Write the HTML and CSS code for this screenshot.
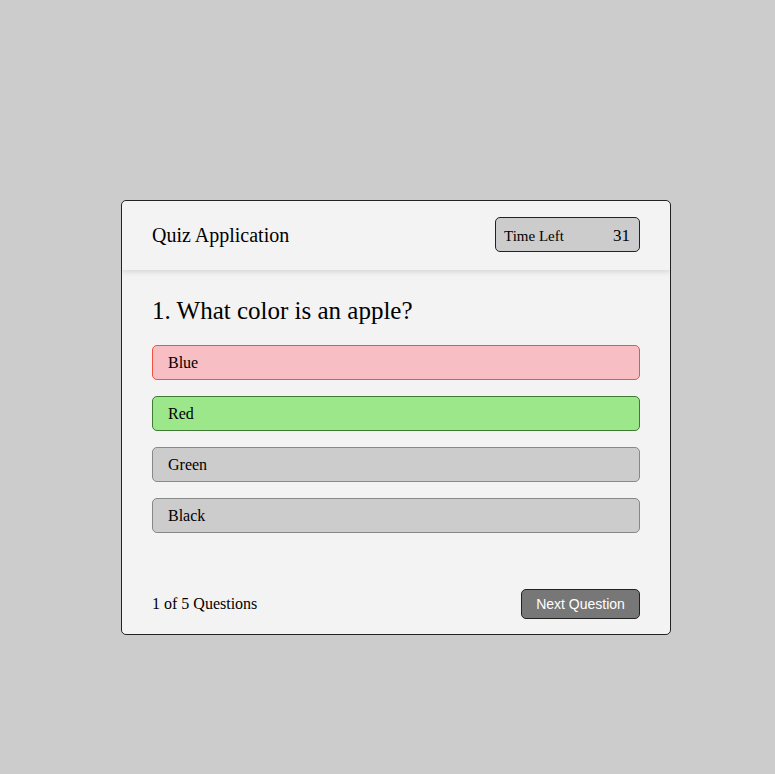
FILE: index.html
```html
<!DOCTYPE html>
<html>
<head>
<meta charset="utf-8">
<link rel="stylesheet" href="styles.css">
</head>
<body>
<div class="page">
  <div class="card">
    <div class="header">
      <div class="title">Quiz Application</div>
      <div class="timer">
        <span class="timer-label">Time Left</span>
        <span class="timer-value">31</span>
      </div>
    </div>
    <div class="body">
      <div class="question">1. What color is an apple?</div>
      <div class="options">
        <div class="option wrong">Blue</div>
        <div class="option right">Red</div>
        <div class="option">Green</div>
        <div class="option">Black</div>
      </div>
    </div>
    <div class="footer">
      <div class="count">1 of 5 Questions</div>
      <button class="next">Next Question</button>
    </div>
  </div>
</div>
</body>
</html>
```
FILE: styles.css
```css
html, body {
  margin: 0;
  padding: 0;
  background: #cccccc;
  font-family: "Liberation Serif", "Times New Roman", serif;
  color: #000;
}
.page {
  height: 774px;
  padding: 200px 0 0 121px;
  box-sizing: border-box;
}
.card {
  width: 550px;
  height: 435px;
  box-sizing: border-box;
  border: 1px solid #222;
  border-radius: 5px;
  background: #f3f3f3;
  display: flex;
  flex-direction: column;
  overflow: hidden;
}
.header {
  height: 69px;
  flex: none;
  display: flex;
  align-items: center;
  justify-content: space-between;
  padding: 0 30px;
  box-shadow: 0 2px 5px rgba(0,0,0,0.12);
  position: relative;
}
.title {
  font-size: 20px;
  margin-top: -1px;
}
.timer {
  width: 145px;
  height: 35px;
  box-sizing: border-box;
  background: #cccccc;
  border: 1px solid #222;
  border-radius: 5px;
  display: flex;
  align-items: center;
  justify-content: space-between;
  padding: 0 9px 0 8px;
  margin-top: -3px;
}
.timer-label { font-size: 15px; margin-top: 5px; }
.timer-value { font-size: 17px; margin-top: 4px; }
.body {
  padding: 26px 30px 0;
  flex: 1;
}
.question {
  font-size: 25px;
  line-height: 30px;
  margin-bottom: 19px;
}
.options {
  display: flex;
  flex-direction: column;
  gap: 16px;
}
.option {
  height: 35px;
  box-sizing: border-box;
  border: 1px solid #888;
  border-radius: 5px;
  background: #cccccc;
  font-size: 16px;
  padding-left: 15px;
  display: flex;
  align-items: center;
}
.option.wrong {
  background: #f7bec4;
  border-color: #f0533f;
}
.option.right {
  background: #9ce78a;
  border-color: #3f7a34;
}
.footer {
  display: flex;
  align-items: center;
  justify-content: space-between;
  padding: 0 30px;
  height: 30px;
  margin-bottom: 15px;
}
.count {
  font-size: 16px;
}
.next {
  width: 119px;
  height: 30px;
  background: #777777;
  color: #fff;
  border: 1px solid #222;
  border-radius: 5px;
  font-family: "Liberation Sans", Arial, sans-serif;
  font-size: 14px;
  padding: 0;
}
```
